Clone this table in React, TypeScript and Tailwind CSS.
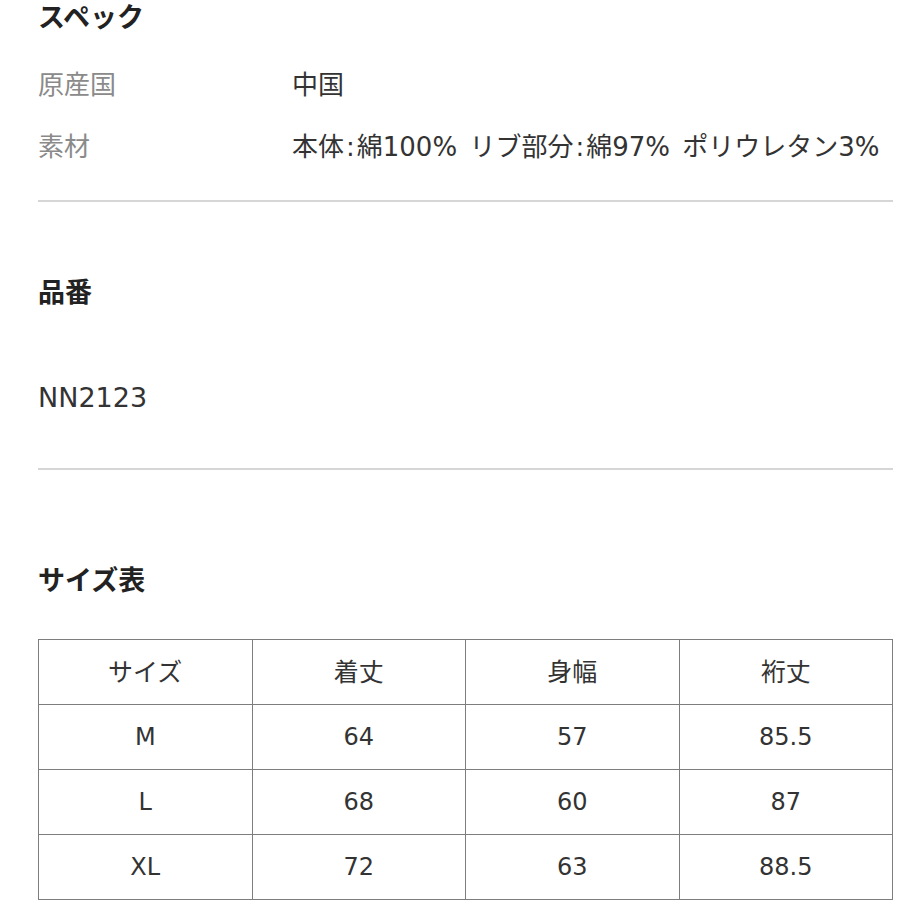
const font = { fontFamily: '"DejaVu Sans", "Noto Sans CJK JP", sans-serif' };

const sizes = [
  ['M', '64', '57', '85.5'],
  ['L', '68', '60', '87'],
  ['XL', '72', '63', '88.5'],
];

function Heading({ children }: { children: React.ReactNode }) {
  return (
    <div className="h-[40px] flex items-center text-[27px] font-bold leading-none text-[#222]">
      {children}
    </div>
  );
}

function Colon() {
  return <span className="mx-[2px]">:</span>;
}

export default function App() {
  return (
    <div className="w-[900px] h-[900px] overflow-hidden bg-white" style={font}>
      <div className="pl-[38px] pr-[7px] -mt-[3px]">
        {/* スペック */}
        <Heading>スペック</Heading>
        <div className="mt-[17px] text-[26px] leading-none">
          <div className="grid grid-cols-[254px_1fr] h-[62px] items-center">
            <span className="text-[#8a8a8a]">原産国</span>
            <span className="text-[#333]">中国</span>
          </div>
          <div className="grid grid-cols-[254px_1fr] h-[62px] items-center">
            <span className="text-[#8a8a8a]">素材</span>
            <span className="text-[#333] whitespace-nowrap [word-spacing:4px]">
              本体<Colon />綿100% リブ部分<Colon />綿97% ポリウレタン3%
            </span>
          </div>
        </div>
        <div className="mt-[22px] h-[2px] bg-[#d6d6d6]" />

        {/* 品番 */}
        <div className="mt-[70px]">
          <Heading>品番</Heading>
        </div>
        <div className="mt-[65px] h-[40px] flex items-center text-[27px] leading-none text-[#333]">NN2123</div>
        <div className="mt-[51px] h-[2px] bg-[#d6d6d6]" />

        {/* サイズ表 */}
        <div className="mt-[90px]">
          <Heading>サイズ表</Heading>
        </div>
        <table className="mt-[39px] w-[855px] border-collapse table-fixed text-[25px] leading-none text-[#333]">
          <thead>
            <tr>
              {['サイズ', '着丈', '身幅', '裄丈'].map((h) => (
                <th key={h} className="h-[65px] border border-[#7d7d7d] font-normal text-center">{h}</th>
              ))}
            </tr>
          </thead>
          <tbody>
            {sizes.map((row) => (
              <tr key={row[0]}>
                {row.map((c, i) => (
                  <td key={i} className="h-[65px] border border-[#7d7d7d] text-center text-[24px]">{c}</td>
                ))}
              </tr>
            ))}
          </tbody>
        </table>
      </div>
    </div>
  );
}
